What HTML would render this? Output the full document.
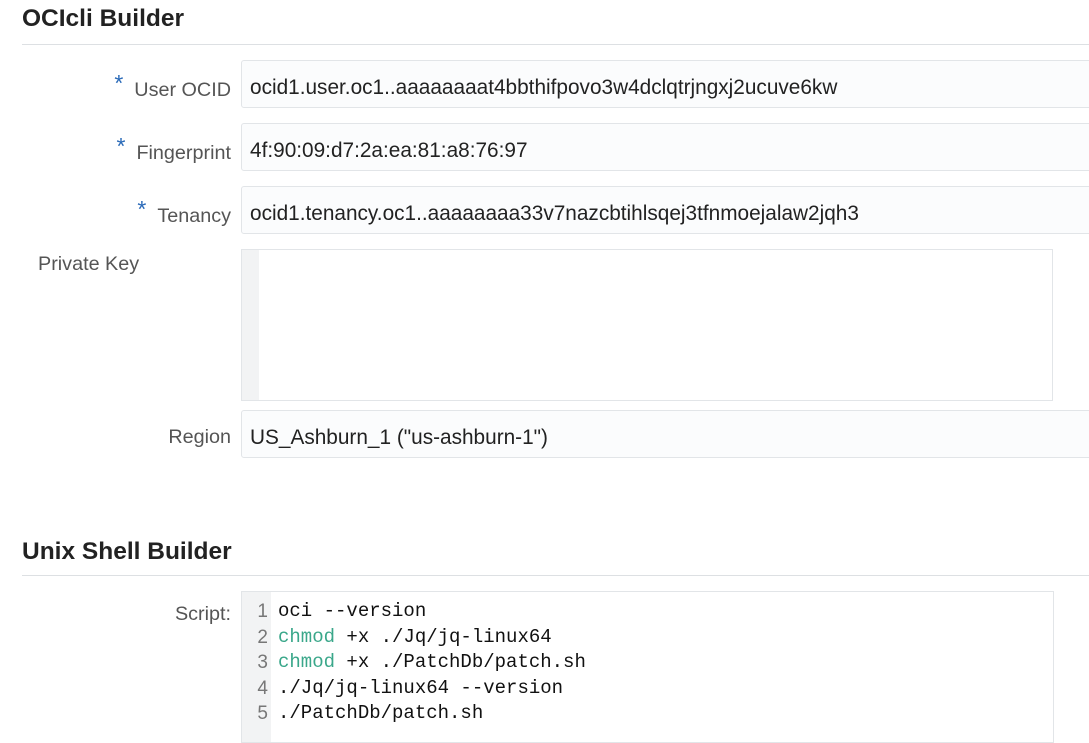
<!DOCTYPE html>
<html><head><style>
body{margin:0;background:#fff;font-family:"Liberation Sans",sans-serif;width:1089px;height:731px;overflow:hidden;position:relative;color:#222}
.h{position:absolute;left:22px;font-weight:bold;font-size:24.5px;color:#222}
.hr{position:absolute;left:22px;right:0;height:1px;background:#dde0e3}
.lab{position:absolute;right:858px;font-size:19.8px;color:#555;text-align:right;white-space:nowrap}
.lab b{color:#2a6ab8;font-weight:normal;font-size:23px;margin-right:11px;position:relative;top:-5px}
.in{position:absolute;left:241px;right:-5px;height:46px;border:1px solid #e2e5e8;border-radius:3px;background:#fbfcfd;font-size:20.8px;line-height:54px;padding-left:8px;color:#222;box-sizing:content-box;overflow:hidden;white-space:nowrap}
.code{position:absolute;left:241px;top:591px;width:811px;height:150px;border:1px solid #e2e5e8;background:#fff;font-family:"Liberation Mono",monospace;font-size:19px;line-height:25.6px}
.gut{position:absolute;left:0;top:0;width:29px;height:100%;background:#f2f3f4;color:#777;text-align:right;padding-top:7px;box-sizing:border-box}
.gut div{padding-right:3px;font-family:"Liberation Sans",sans-serif;font-size:19px}
.txt{position:absolute;left:36px;top:7px;color:#111}
.g{color:#3aa78a}
</style></head><body>
<div class="h" style="top:5px">OCIcli Builder</div>
<div class="hr" style="top:44px"></div>
<div class="lab" style="top:75px"><b>*</b>User OCID</div>
<div class="in" style="top:60px">ocid1.user.oc1..aaaaaaaat4bbthifpovo3w4dclqtrjngxj2ucuve6kw</div>
<div class="lab" style="top:138px"><b>*</b>Fingerprint</div>
<div class="in" style="top:123px">4f:90:09:d7:2a:ea:81:a8:76:97</div>
<div class="lab" style="top:201px"><b>*</b>Tenancy</div>
<div class="in" style="top:186px">ocid1.tenancy.oc1..aaaaaaaa33v7nazcbtihlsqej3tfnmoejalaw2jqh3</div>
<div class="lab" style="top:253px;right:auto;left:38px">Private Key</div>
<div style="position:absolute;left:241px;top:249px;width:810px;height:150px;border:1px solid #e2e5e8;background:#fff"><div style="width:17px;height:100%;background:#f2f3f4"></div></div>
<div class="lab" style="top:426px">Region</div>
<div class="in" style="top:410px">US_Ashburn_1 ("us-ashburn-1")</div>
<div class="h" style="top:538px">Unix Shell Builder</div>
<div class="hr" style="top:575px"></div>
<div class="lab" style="top:603px">Script:</div>
<div class="code"><div class="gut"><div>1</div><div>2</div><div>3</div><div>4</div><div>5</div></div>
<div class="txt"><div>oci --version</div><div><span class="g">chmod</span> +x ./Jq/jq-linux64</div><div><span class="g">chmod</span> +x ./PatchDb/patch.sh</div><div>./Jq/jq-linux64 --version</div><div>./PatchDb/patch.sh</div></div></div>
</body></html>
